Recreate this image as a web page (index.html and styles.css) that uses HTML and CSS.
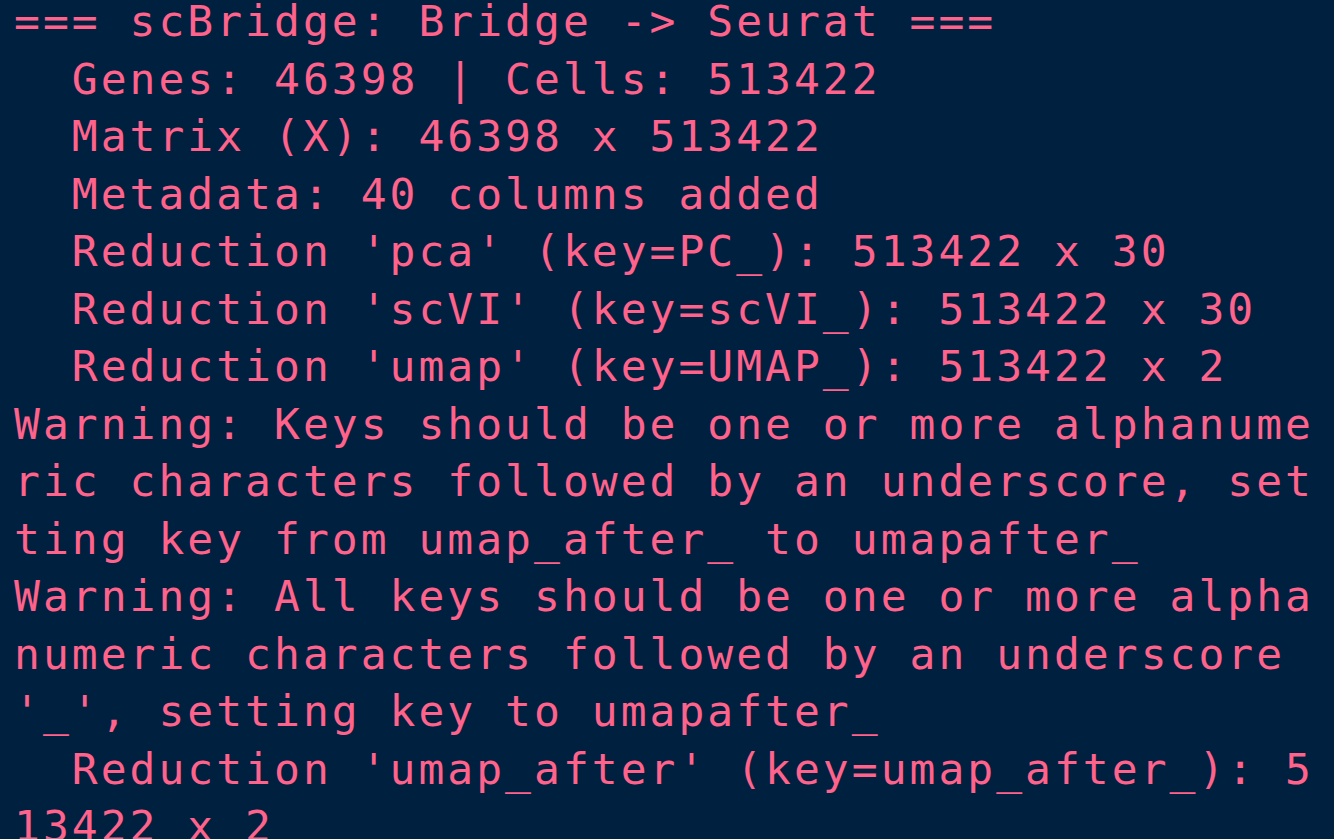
FILE: index.html
```html
<!DOCTYPE html>
<html>
<head>
<meta charset="utf-8">
<link rel="stylesheet" href="styles.css">
</head>
<body>
<pre class="term"><div class="ln">=== scBridge: Bridge -&gt; Seurat ===</div><div class="ln">  Genes: 46398 | Cells: 513422</div><div class="ln">  Matrix (X): 46398 x 513422</div><div class="ln">  Metadata: 40 columns added</div><div class="ln">  Reduction 'pca' (key=PC_): 513422 x 30</div><div class="ln">  Reduction 'scVI' (key=scVI_): 513422 x 30</div><div class="ln">  Reduction 'umap' (key=UMAP_): 513422 x 2</div><div class="ln">Warning: Keys should be one or more alphanume</div><div class="ln">ric characters followed by an underscore, set</div><div class="ln">ting key from umap_after_ to umapafter_</div><div class="ln">Warning: All keys should be one or more alpha</div><div class="ln">numeric characters followed by an underscore </div><div class="ln">'_', setting key to umapafter_</div><div class="ln">  Reduction 'umap_after' (key=umap_after_): 5</div><div class="ln">13422 x 2</div></pre>
</body>
</html>
```

FILE: styles.css
```css
html, body {
  margin: 0;
  padding: 0;
  background: #002040;
  height: 100%;
  overflow: hidden;
}
.term {
  margin: -7px 0 0 0;
  padding: 0 0 0 14px;
  font-family: "DejaVu Sans Mono", monospace;
  font-size: 43px;
  letter-spacing: 3px;
  line-height: 57.5px;
  color: #ff628a;
  white-space: pre;
}
.ln {
  height: 57.5px;
}
```
